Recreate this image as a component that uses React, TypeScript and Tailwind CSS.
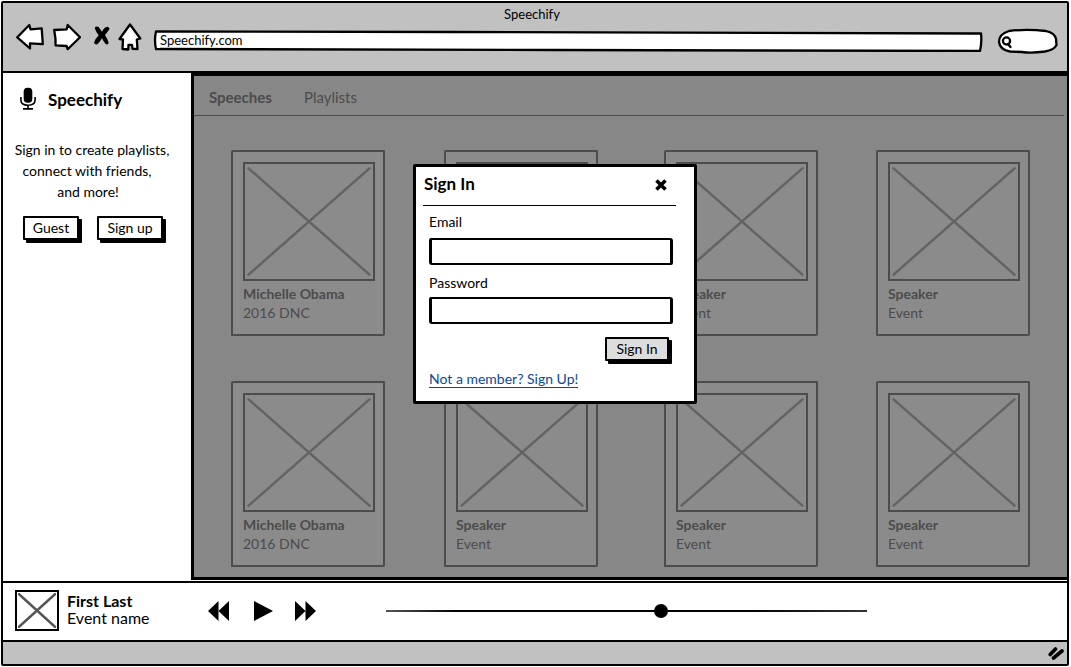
import { ReactNode } from "react";

type Speech = { speaker: string; event: string };

const speeches: Speech[] = [
  { speaker: "Michelle Obama", event: "2016 DNC" },
  { speaker: "Speaker", event: "Event" },
  { speaker: "Speaker", event: "Event" },
  { speaker: "Speaker", event: "Event" },
  { speaker: "Michelle Obama", event: "2016 DNC" },
  { speaker: "Speaker", event: "Event" },
  { speaker: "Speaker", event: "Event" },
  { speaker: "Speaker", event: "Event" },
];

function Cross({ className }: { className: string }) {
  return (
    <svg className={className} viewBox="0 0 100 100" preserveAspectRatio="none" fill="none" stroke="currentColor" strokeLinecap="round" aria-hidden="true">
      <path d="M2 3 98 97M98 3 2 97" strokeWidth="2.5" vectorEffect="non-scaling-stroke" />
    </svg>
  );
}

function NavButton({ label, className, children }: { label: string; className: string; children: ReactNode }) {
  return (
    <button type="button" aria-label={label} className={className}>
      {children}
    </button>
  );
}

function BrowserBar() {
  return (
    <header className="h-[70px] shrink-0 border-b-2 border-black bg-[#c1c1c1]">
      <h1 className="h-5 pr-[6px] text-center text-[13px] leading-[22px]">Speechify</h1>
      <div className="flex items-start pl-[13px] pr-[9px]">
        <NavButton label="Back" className="h-7 w-7">
          <svg viewBox="0 0 28 28" fill="white" stroke="black" strokeWidth="2.3" strokeLinejoin="round">
            <path d="M1.300 14.300 13.300 2 14.500 6.300 25.700 5.300 26.800 21.200 14 20.300 14 25.500Z" />
          </svg>
        </NavButton>
        <NavButton label="Forward" className="ml-[9px] h-7 w-7">
          <svg viewBox="0 0 28 28" fill="white" stroke="black" strokeWidth="2.3" strokeLinejoin="round">
            <path d="M1.200 7 13.700 6.300 14.700 2 27 14.300 14.700 26.300 13.700 23 2.500 22.300 2.500 16Z" />
          </svg>
        </NavButton>
        <NavButton label="Stop" className="ml-[13px] mt-[3px] h-[19px] w-4">
          <svg viewBox="0 0 48 57" fill="black">
            <path d="M2 6Q6-1 14 3L24 17Q30 3 40 2 48 4 46 10 38 22 33 27 40 38 44 50 42 58 35 54 28 46 24 37 16 50 10 55 2 56 0 50 4 38 14 28 6 18 2 6Z" />
          </svg>
        </NavButton>
        <NavButton label="Home" className="ml-2 h-7 w-6">
          <svg viewBox="0 0 24 28" fill="white" stroke="black" strokeWidth="2.3" strokeLinejoin="round">
            <path d="M12 1.500 22.300 15.500 18.800 16.500 19.500 26 14.500 25.800 14 21.800 10.500 21.800 10.300 26.500 4.500 26 5 16.500 1.500 16Z" />
          </svg>
        </NavButton>
        <div className="relative ml-[11px] mt-[7px] h-[22px] flex-1">
          <svg className="absolute inset-0 h-full w-full" viewBox="0 0 830 22" preserveAspectRatio="none" fill="white" stroke="black" strokeWidth="2.3" strokeLinejoin="round" aria-hidden="true">
            <path d="M3 1.500 300 2 828 3.500Q829 12 827 21L400 20 3 19Q1 10 3 1.500Z" />
          </svg>
          <input aria-label="Address" defaultValue="Speechify.com" className="relative block h-[22px] w-full bg-transparent px-[7px] pb-[2px] text-[13px] leading-5 outline-none" />
        </div>
        <label className="relative ml-[14px] mt-[5px] h-[26px] w-[61px]">
          <svg className="absolute inset-0" viewBox="0 0 61 26" fill="white" stroke="black" strokeWidth="2.3" aria-hidden="true">
            <path d="M12 3Q29 .8 49 3 58 5 59 11L59.500 17Q57 22 48 23.500 34 25.500 25 24L13 23.500Q3 22 2 14 2 6 12 3Z" />
            <circle cx="9.500" cy="13" r="3.600" />
            <path d="M11 16 13.500 19" strokeLinecap="round" />
          </svg>
          <input type="search" aria-label="Search" className="relative block h-full w-full bg-transparent pl-5 pr-2 text-[13px] outline-none" />
        </label>
      </div>
    </header>
  );
}

function SketchButton({ children, className }: { children: ReactNode; className: string }) {
  return (
    <button type="submit" className={`h-6 rounded-[1px] border-2 border-black text-[14px] leading-5 shadow-[3px_3px_0_black] ${className}`}>
      {children}
    </button>
  );
}

function Sidebar() {
  return (
    <aside className="w-[188px] shrink-0 bg-white pt-[14px]">
      <div className="flex items-start pl-[17px]">
        <svg className="h-[23px] w-4" viewBox="0 0 16 23" fill="none" stroke="black" strokeWidth="1.600" aria-hidden="true">
          <rect x="3.700" y=".8" width="8.600" height="15" rx="3.800" fill="black" stroke="none" />
          <path d="M.9 10v3Q1 18.200 8 18.200T15.100 13v-3M8 18v3.500M3 21.900h10" />
        </svg>
        <h2 className="ml-3 text-[17px] font-bold leading-[26px]">Speechify</h2>
      </div>
      <p className="mt-[26px] pr-[10px] text-center text-[14px] leading-[21px]">
        Sign in to create playlists,
        <br />
        <span className="pr-[10px]">connect with friends,</span>
        <br />
        <span className="pr-2">and more!</span>
      </p>
      <div className="mt-[14px] flex gap-[18px] pl-5">
        <SketchButton className="w-[56px] bg-white">Guest</SketchButton>
        <SketchButton className="w-[66px] bg-white">Sign up</SketchButton>
      </div>
    </aside>
  );
}

function SpeechCard({ speaker, event }: Speech) {
  return (
    <article className="h-[186px] w-[154px] rounded-[2px_1px_2px_1px] border-2 border-[#4c4c4c] bg-[#8b8b8b] px-[10px] pt-[10px] text-[14px] leading-[19px]">
      <div className="h-[119px] w-[132px] border-2 border-[#4c4c4c] p-px">
        <Cross className="h-full w-full text-[#636363]" />
      </div>
      <h3 className="mt-[3px] whitespace-nowrap font-bold">{speaker}</h3>
      <p>{event}</p>
    </article>
  );
}

function SignInDialog() {
  const field = "block h-[27px] w-[244px] rounded-[2px_3px_2px_3px] border-x-[3px] border-y-2 border-black bg-white px-1 text-[14px] outline-none";
  return (
    <form role="dialog" aria-label="Sign In" onSubmit={(e) => e.preventDefault()} className="absolute left-[219px] top-[88px] h-[240px] w-[284px] rounded-[2px] border-[3px] border-black bg-white text-[14px] text-black">
      <div className="ml-[7px] mr-[18px] flex h-[39px] items-start justify-between border-b border-black pl-px pt-[5px]">
        <h2 className="text-[17px] font-bold leading-6">Sign In</h2>
        <button type="button" aria-label="Close" className="mr-[9px] mt-[7px]">
          <svg className="h-3 w-3" viewBox="0 0 12 12" stroke="black" strokeWidth="3.600" aria-hidden="true">
            <path d="M1.500 1.500 10.500 10.500M10.500 1.500 1.500 10.500" />
          </svg>
        </button>
      </div>
      <div className="pl-[13px]">
        <label htmlFor="email" className="block pb-[7px] pt-[7px] leading-[18px]">Email</label>
        <input id="email" type="email" className={field} />
        <label htmlFor="password" className="block pb-[5px] pt-[9px] leading-[18px]">Password</label>
        <input id="password" type="password" className={field} />
      </div>
      <div className="mt-[13px] flex justify-end pr-[25px]">
        <SketchButton className="w-[64px] bg-[#dddddd]">Sign In</SketchButton>
      </div>
      <a href="#signup" className="ml-[13px] mt-[10px] inline-block border-b border-[#0b4a91] leading-4 text-[#0b4a91]">
        Not a member? Sign Up!
      </a>
    </form>
  );
}

function Player() {
  return (
    <footer className="flex h-[61px] shrink-0 items-center border-y-2 border-black bg-white pb-[2px] pl-3 pr-[200px]">
      <div className="h-[41px] w-11 border-2 border-black p-px">
        <Cross className="h-full w-full text-[#555555]" />
      </div>
      <div className="ml-2 w-[141px] pb-[3px] text-[16px] leading-[17px]">
        <p className="font-bold">First Last</p>
        <p>Event name</p>
      </div>
      <div className="flex items-center">
        <button type="button" aria-label="Rewind">
          <svg className="h-5 w-[21px]" viewBox="0 0 21 20"><path d="M0 10 10.500 0v20ZM10.500 10 21 0v20Z" /></svg>
        </button>
        <button type="button" aria-label="Play" className="ml-[25px]">
          <svg className="h-5 w-[19px]" viewBox="0 0 19 20"><path d="M0 0 19 10 0 20Z" /></svg>
        </button>
        <button type="button" aria-label="Fast forward" className="ml-[22px]">
          <svg className="h-5 w-[21px]" viewBox="0 0 21 20"><path d="M0 0 10.500 10 0 20ZM10.500 0 21 10 10.500 20Z" /></svg>
        </button>
      </div>
      <input
        type="range"
        aria-label="Position"
        min="0"
        max="1000"
        defaultValue="573"
        className="ml-[70px] h-4 min-w-0 flex-1 appearance-none bg-transparent bg-[linear-gradient(90deg,#555,black_15%,black_75%,#333)] bg-[length:100%_2px] bg-center bg-no-repeat [&::-webkit-slider-thumb]:h-[14px] [&::-webkit-slider-thumb]:w-[14px] [&::-webkit-slider-thumb]:appearance-none [&::-webkit-slider-thumb]:rounded-full [&::-webkit-slider-thumb]:bg-black"
      />
    </footer>
  );
}

export default function App() {
  return (
    <div className="flex min-h-screen flex-col bg-white pb-px pl-px pr-0.5 pt-px font-['Lato','Open_Sans',sans-serif] text-black">
      <div className="flex flex-1 flex-col rounded-[2px] border-2 border-black">
        <BrowserBar />
        <div className="flex flex-1">
          <Sidebar />
          <main className="relative mb-px flex-1 border-b-[3px] border-l-[3px] border-t-[3px] border-black bg-[#878787] pb-[10px] text-[#4c4c4c]">
            <nav className="mr-[3px] flex h-10 items-center gap-8 border-b border-[#4c4c4c] pl-[15px] pt-[3px] text-[15px] leading-5">
              <a href="#speeches" className="font-bold">Speeches</a>
              <a href="#playlists">Playlists</a>
            </nav>
            <div className="mx-[37px] mt-[34px] grid grid-cols-[213fr_220fr_212fr_154fr] gap-y-[45px]">
              {speeches.map((speech, i) => (
                <SpeechCard key={i} {...speech} />
              ))}
            </div>
            <SignInDialog />
          </main>
        </div>
        <Player />
        <div className="flex h-[22px] shrink-0 items-center justify-end bg-[#c1c1c1] pr-[3px]">
          <svg className="h-[14px] w-4" viewBox="0 0 16 14" stroke="black" strokeWidth="3.600" strokeLinecap="round" aria-hidden="true">
            <path d="M2.200 8.500 7.500 3M5.500 12 14 5" />
          </svg>
        </div>
      </div>
    </div>
  );
}
